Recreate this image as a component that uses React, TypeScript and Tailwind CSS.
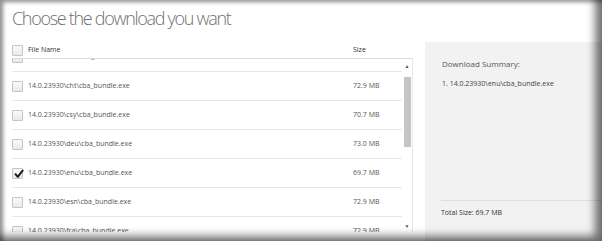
import React from "react";

const rows = [
  { name: "14.0.23930\\chs\\cba_bundle.exe", size: "72.9 MB", checked: false },
  { name: "14.0.23930\\cht\\cba_bundle.exe", size: "72.9 MB", checked: false },
  { name: "14.0.23930\\csy\\cba_bundle.exe", size: "70.7 MB", checked: false },
  { name: "14.0.23930\\deu\\cba_bundle.exe", size: "73.0 MB", checked: false },
  { name: "14.0.23930\\enu\\cba_bundle.exe", size: "69.7 MB", checked: true },
  { name: "14.0.23930\\esn\\cba_bundle.exe", size: "72.9 MB", checked: false },
  { name: "14.0.23930\\fra\\cba_bundle.exe", size: "72.9 MB", checked: false },
];

function Box({ checked }: { checked?: boolean }) {
  return (
    <div className="relative w-[11px] h-[11px] flex-none border border-[#c4c4c4] bg-gradient-to-b from-[#fafafa] to-[#e9e9e9] rounded-[1px]">
      {checked && (
        <svg className="absolute left-[1px] top-[0px]" width="10" height="10" viewBox="0 0 10 10">
          <path d="M1.5 5.2 L3.8 7.8 L8.6 1.6" fill="none" stroke="#1a1a1a" strokeWidth="2" strokeLinecap="round" strokeLinejoin="round" />
        </svg>
      )}
    </div>
  );
}

export default function App() {
  return (
    <div className="relative w-[602px] h-[241px] overflow-hidden bg-white font-['Open_Sans',sans-serif] flex flex-col">
      <div className="pt-[6px] pl-[12px] text-[18px] leading-[24px] font-light tracking-[-1.3px] text-[#707070]">
        Choose the download you want
      </div>
      <div className="mt-[12px] flex flex-1 min-h-0">
        <div className="ml-[12px] w-[401px] flex flex-col">
          <div className="h-[17px] flex items-center border-b border-[#dcdcdc] text-[7px] text-[#333]">
            <Box />
            <span className="ml-[5px] w-[325px]">File Name</span>
            <span>Size</span>
          </div>
          <div className="h-[173px] flex overflow-hidden">
            <div className="flex-1 flex flex-col">
              {rows.map((r, i) => (
                <div
                  key={r.name}
                  className={
                    "h-[29px] flex-none flex items-center border-b border-[#e6e6e6] text-[7px] text-[#555]" +
                    (i === 0 ? " -mt-[16px]" : "")
                  }
                >
                  <Box checked={r.checked} />
                  <span className="ml-[5px] w-[325px]">{r.name}</span>
                  <span>{r.size}</span>
                </div>
              ))}
            </div>
            <div className="w-[11px] flex flex-col items-center border-r border-[#e8e8e8]">
              <div className="h-[14px] flex items-center justify-center text-[5px] text-[#555] leading-none">▲</div>
              <div className="mt-[4px] h-[70px] w-[7px] bg-[#c6c6c6]" />
              <div className="flex-1" />
              <div className="h-[12px] flex items-center justify-center text-[5px] text-[#555] leading-none">▼</div>
            </div>
          </div>
        </div>
        <div className="ml-[12px] flex-1 bg-[#f2f2f2] flex flex-col pt-[16px] pb-[23px]">
          <div className="pl-[17px] text-[8px] leading-[12px] text-[#555]">Download Summary:</div>
          <div className="pl-[17px] mt-[9px] text-[7px] leading-[10px] text-[#444]">1. 14.0.23930\enu\cba_bundle.exe</div>
          <div className="mt-auto ml-[16px] border-t border-[#dedede] pt-[7px] text-[7px] leading-[10px] text-[#333]">
            Total Size: 69.7 MB
          </div>
        </div>
      </div>
      <div className="pointer-events-none absolute inset-0 shadow-[inset_3px_2px_4px_rgba(0,0,0,0.45),inset_-10px_-8px_8px_-3px_rgba(0,0,0,0.55)]" />
    </div>
  );
}
